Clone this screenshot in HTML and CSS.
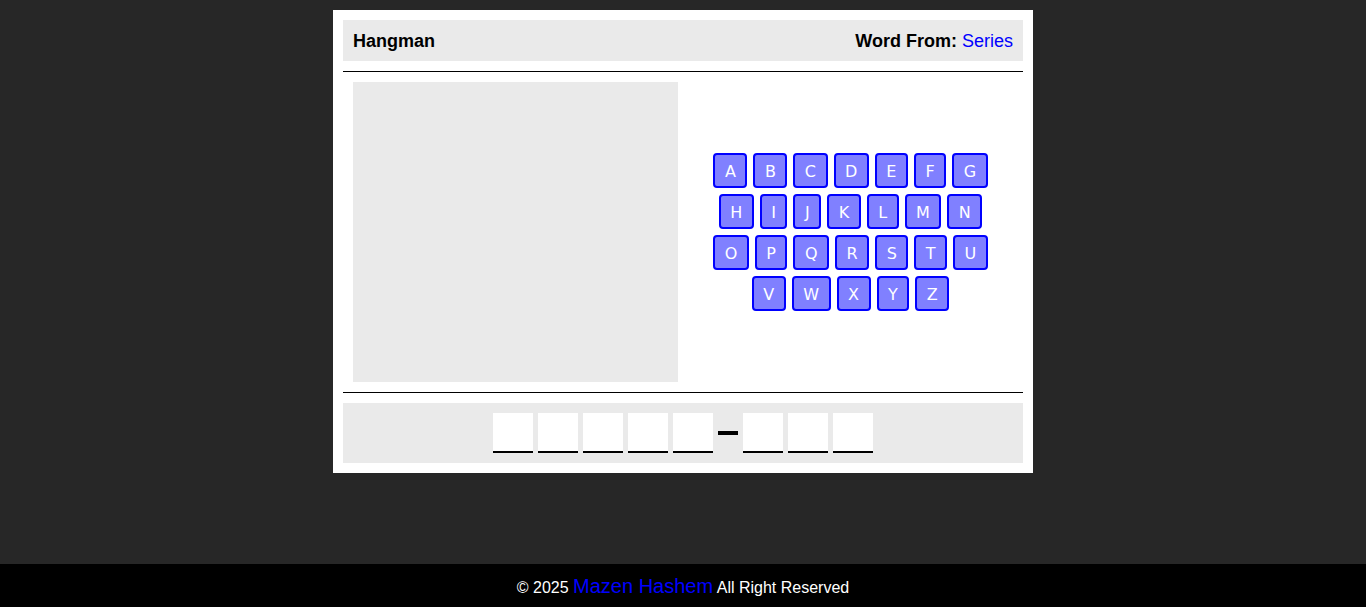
FILE: index.html
```html
<!DOCTYPE html>
<html>
<head>
<meta charset="utf-8">
<title>Hangman</title>
<link rel="stylesheet" href="styles.css">
</head>
<body>
<main class="container">
  <header class="info">
    <div class="title">Hangman</div>
    <div class="category">Word From: <span class="cat-name">Series</span></div>
  </header>
  <section class="game">
    <div class="draw"></div>
    <div class="letters-wrap">
      <div class="letters">
        <span class="letter">A</span><span class="letter">B</span><span class="letter">C</span><span class="letter">D</span><span class="letter">E</span><span class="letter">F</span><span class="letter">G</span>
        <span class="letter">H</span><span class="letter">I</span><span class="letter">J</span><span class="letter">K</span><span class="letter">L</span><span class="letter">M</span><span class="letter">N</span>
        <span class="letter">O</span><span class="letter">P</span><span class="letter">Q</span><span class="letter">R</span><span class="letter">S</span><span class="letter">T</span><span class="letter">U</span>
        <span class="letter">V</span><span class="letter">W</span><span class="letter">X</span><span class="letter">Y</span><span class="letter">Z</span>
      </div>
    </div>
  </section>
  <section class="guess">
    <span class="slot"></span><span class="slot"></span><span class="slot"></span><span class="slot"></span><span class="slot"></span>
    <span class="space"></span>
    <span class="slot"></span><span class="slot"></span><span class="slot"></span>
  </section>
</main>
<footer class="footer">© 2025 <span class="author">Mazen Hashem</span> All Right Reserved</footer>
</body>
</html>
```
FILE: styles.css
```css
* { box-sizing: border-box; }
html, body { margin: 0; padding: 0; }
body {
  background: #272727;
  font-family: "Liberation Sans", Arial, sans-serif;
  min-height: 100vh;
  display: flex;
  flex-direction: column;
}
.container {
  width: 700px;
  margin: 10px auto 0;
  background: #fff;
  padding: 10px;
}
.info {
  display: flex;
  justify-content: space-between;
  align-items: center;
  background: #eaeaea;
  padding: 11px 10px 9px;
  font-size: 18px;
  line-height: 21px;
  font-weight: bold;
  color: #000;
}
.cat-name { color: #0000ff; font-weight: normal; }
.game {
  display: flex;
  margin: 10px 0;
  padding: 10px;
  border-top: 1px solid #000;
  border-bottom: 1px solid #000;
}
.draw {
  width: 325px;
  height: 300px;
  background: #eaeaea;
  flex-shrink: 0;
}
.letters-wrap {
  flex: 1;
  display: flex;
  align-items: center;
  justify-content: center;
  padding-left: 10px;
}
.letters {
  width: 300px;
  display: flex;
  flex-wrap: wrap;
  justify-content: center;
}
.letter {
  font-family: Tahoma, "DejaVu Sans", Verdana, sans-serif;
  font-size: 16px;
  line-height: 19px;
  color: #fff;
  background: #8080ff;
  border: 2px solid #0000ff;
  border-radius: 4px;
  padding: 7px 9.5px 5px;
  margin: 3px;
  text-align: center;
}
.guess {
  background: #eaeaea;
  padding: 10px;
  display: flex;
  justify-content: center;
  align-items: center;
  gap: 5px;
}
.slot {
  width: 40px;
  height: 40px;
  background: #fff;
  border-bottom: 2px solid #000;
}
.space {
  width: 20px;
  height: 4px;
  background: #000;
}
.footer {
  margin-top: auto;
  background: #000;
  color: #fff;
  text-align: center;
  font-size: 16px;
  line-height: 23px;
  height: 43px;
  padding: 12px 10px 8px;
}
.author { color: #0000ff; font-size: 20px; line-height: 20px; }
```
